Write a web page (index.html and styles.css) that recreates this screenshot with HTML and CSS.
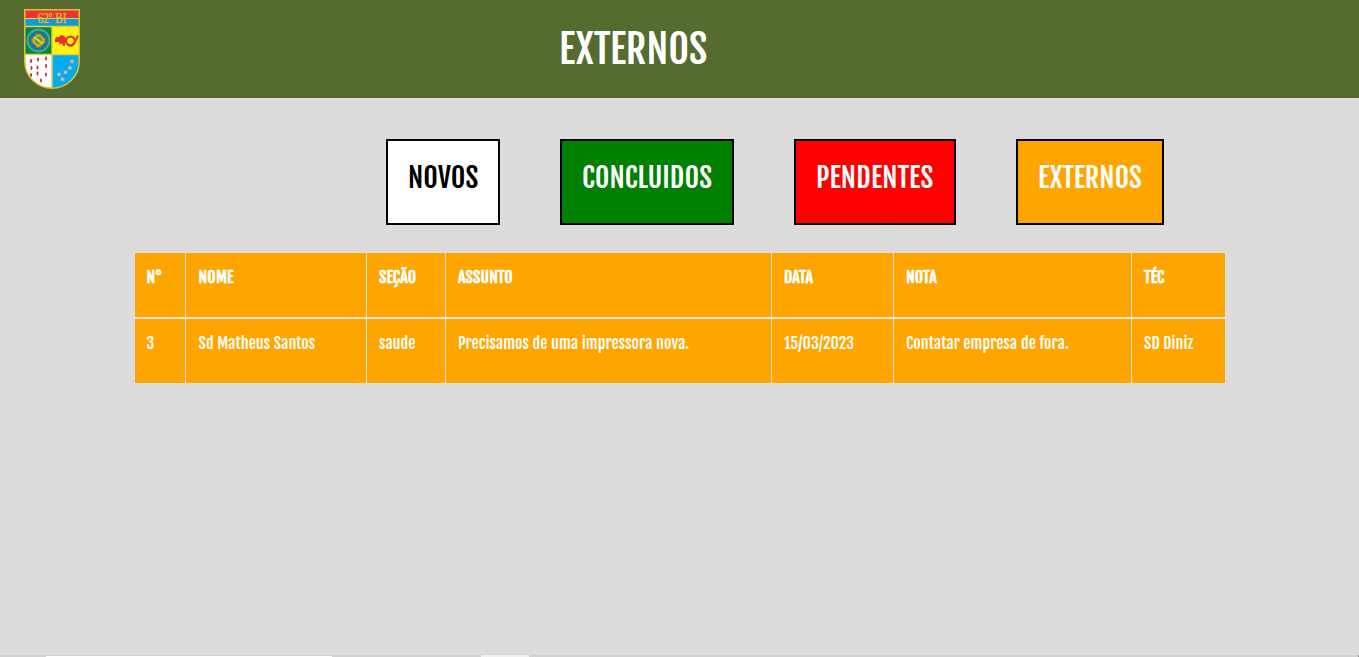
FILE: index.html
```html
<!DOCTYPE html>
<html lang="pt-BR">
<head>
<meta charset="utf-8">
<title>Externos</title>
<link rel="stylesheet" href="styles.css">
</head>
<body>
<header class="topbar">
  <svg class="crest" viewBox="0 0 56 80" width="56" height="80">
    <defs><clipPath id="shield"><path d="M1 1H55V53C55 68 42 79 28 79S1 68 1 53Z"/></clipPath></defs>
    <g clip-path="url(#shield)">
      <path fill="#fff" d="M0 0H56V80H0Z"/>
      <path fill="#ee3136" d="M0 0H56V9H0Z"/>
      <path fill="#e9d52b" d="M0 9H56V10H0Z"/>
      <path fill="#0b9bdc" d="M0 10H56V17H0Z"/>
      <path fill="#078642" d="M0 18H28V45H0Z"/>
      <path fill="#fff20d" d="M28 18H56V45H28Z"/>
      <path fill="#00aeef" d="M28 46H56V80H28Z"/>
      <path d="M0 17.500H56M0 45.500H56M28 17.500V80" stroke="#e8cf35" stroke-width="1.400"/>
      <circle cx="14.500" cy="31.500" r="11" fill="#168c70" stroke="#4aa6a0" stroke-width="1.800"/>
      <circle cx="14.500" cy="31.500" r="8" fill="none" stroke="#176fa5" stroke-width="1.500"/>
      <path d="M14.500 24.500V38.500M7.500 31.500H21.500" stroke="#e96b25" stroke-width="5"/>
      <circle cx="14.500" cy="31.500" r="4.800" fill="#5fa045" stroke="#e7c330" stroke-width="1.300"/>
      <path d="M10 28L19 35" stroke="#e7d634" stroke-width="1.800"/>
      <path fill="#e53232" d="M31 31L32 28L35 28L37 26L40 27L43 30L43 33L41 34L41 37L39 37L38 34L36 36L35 33L31 33Z"/>
      <circle cx="46.500" cy="32" r="4.400" fill="none" stroke="#e53232" stroke-width="2.200"/>
      <path d="M46 37C50 36 52 32 54 26.500" fill="none" stroke="#e53232" stroke-width="2"/>
      <path d="M7 51v2m7-3.500v2m8-3v2M7.500 58v2m6-2.500v2m8.500-3.500v2M7 65v2m6.500-3.500v2m8.500-1v2M17 70.500v2" stroke="#c92b3c" stroke-width="1.800" stroke-linecap="round"/>
      <g fill="#a8cbd8" stroke="#54849b" stroke-width=".4">
        <path id="star" d="M48 49l1 2.200h2.500l-2 1.600.7 2.300-2.200-1.300-2.200 1.300.7-2.300-2-1.600H47Z"/>
        <use href="#star" x="-2" y="6.500"/><use href="#star" x="-6.500" y="11"/>
        <use href="#star" x="-13" y="13"/><use href="#star" x="-9.500" y="18"/>
      </g>
    </g>
    <path d="M.8.8H55.200V53C55.200 68 42 79.200 28 79.200S.8 68 .8 53Z" fill="none" stroke="#dfc12f" stroke-width="1.500"/>
    <text class="crest-text" x="13.500" y="14" textLength="29" lengthAdjust="spacingAndGlyphs">62º BI</text>
  </svg>
  <h1 class="title">EXTERNOS</h1>
</header>
<nav class="filters">
  <a class="filter novos">NOVOS</a>
  <a class="filter concluidos">CONCLUIDOS</a>
  <a class="filter pendentes">PENDENTES</a>
  <a class="filter externos">EXTERNOS</a>
</nav>
<main class="table">
  <div class="row head">
    <div class="cell">N°</div>
    <div class="cell">NOME</div>
    <div class="cell">SEÇÃO</div>
    <div class="cell">ASSUNTO</div>
    <div class="cell">DATA</div>
    <div class="cell">NOTA</div>
    <div class="cell">TÉC</div>
  </div>
  <div class="row">
    <div class="cell">3</div>
    <div class="cell">Sd Matheus Santos</div>
    <div class="cell">saude</div>
    <div class="cell">Precisamos de uma impressora nova.</div>
    <div class="cell">15/03/2023</div>
    <div class="cell">Contatar empresa de fora.</div>
    <div class="cell">SD Diniz</div>
  </div>
</main>
<footer class="edge"><span class="edge-field"></span><span class="edge-tab"></span><span class="edge-end"></span></footer>
</body>
</html>
```
FILE: styles.css
```css
* { box-sizing: border-box; }
body {
  margin: 0;
  height: 657px;
  overflow: hidden;
  display: flex;
  flex-direction: column;
  background: #dcdcdc;
  font-family: "Fjalla One", Roboto, "Liberation Sans", sans-serif;
}
.topbar {
  display: flex;
  height: 98px;
  padding: 9px 24px;
  background: #556b2f;
  color: #fff;
}
.crest { flex: none; }
.crest-text {
  font: 14px "Liberation Serif", serif;
  fill: #f0c52c;
  stroke: #d8a82a;
  stroke-width: .5px;
}
.title {
  margin: 16px 0 0 479px;
  font-size: 40px;
  line-height: 48px;
  font-weight: 500;
}
.filters {
  display: flex;
  gap: 60px;
  margin: 41px 0 0 386px;
}
.filter {
  height: 86px;
  padding: 20px;
  border: 2px solid #000;
  color: #fff;
  font-size: 28px;
  line-height: 33.6px;
  font-weight: 500;
  white-space: nowrap;
}
.novos { width: 114px; background: #fff; color: #000; }
.concluidos { width: 174px; background: #008000; letter-spacing: .08px; }
.pendentes { width: 162px; background: #f00; letter-spacing: .25px; }
.externos { width: 148px; background: #ffa500; }
.table {
  width: 1090px;
  margin: 28px 0 0 135px;
  display: grid;
  gap: 2px;
  background: #e1e3e5;
  box-shadow: 0 0 0 1px #dee0e2;
}
.row {
  display: grid;
  grid-template-columns: 50px 180px 78px 325px 121px 237px 93px;
  gap: 1px;
  height: 64px;
}
.cell {
  min-width: 0;
  padding: 12px 0 0 12px;
  background: #ffa500;
  color: #fff;
  font-size: 16px;
  line-height: 24px;
  letter-spacing: .08px;
  white-space: nowrap;
}
.cell:first-child { padding-left: 11.5px; }
.cell:nth-child(2) { padding-left: 12.5px; }
.head .cell { font-weight: 700; letter-spacing: .15px; }
.edge {
  display: flex;
  align-items: flex-end;
  height: 2px;
  margin-top: auto;
  background: #d1d1d1;
}
.edge-field { width: 286px; height: 1px; margin-left: 46px; background: #fff; }
.edge-tab { width: 48px; height: 2px; margin-left: 149px; background: #f0f0f0; }
.edge-end { width: 1px; height: 2px; margin-left: auto; background: #999; }
```
